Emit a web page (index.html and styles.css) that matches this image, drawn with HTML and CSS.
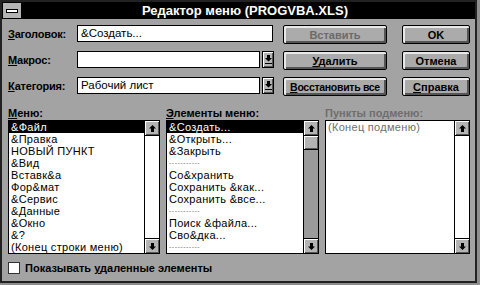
FILE: index.html
```html
<!DOCTYPE html>
<html lang="ru">
<head>
  <meta charset="UTF-8">
  <title>Редактор меню</title>
  <link rel="stylesheet" href="styles.css">
</head>
<body>
  <div class="window">
    <div class="titlebar">
      <div class="sysmenu"><span></span></div>
      <div class="caption">Редактор меню (PROGVBA.XLS)</div>
    </div>

    <div class="body">
      <div class="fields">
        <label class="lbl"><u>З</u>аголовок:</label>
        <div class="edit wide">&amp;Создать...</div>
        <button class="btn disabled">Вставить</button>
        <button class="btn side">OK</button>

        <label class="lbl"><u>М</u>акрос:</label>
        <div class="combo">
          <div class="edit"></div>
          <span class="drop"><svg width="7" height="9" viewBox="0 0 7 9"><path d="M2 0H5V3H7L3.5 6.5L0 3H2Z"/><rect x="0" y="8" width="7" height="1"/></svg></span>
        </div>
        <button class="btn"><u>У</u>далить</button>
        <button class="btn side">Отмена</button>

        <label class="lbl"><u>К</u>атегория:</label>
        <div class="combo">
          <div class="edit">Рабочий лист</div>
          <span class="drop"><svg width="7" height="9" viewBox="0 0 7 9"><path d="M2 0H5V3H7L3.5 6.5L0 3H2Z"/><rect x="0" y="8" width="7" height="1"/></svg></span>
        </div>
        <button class="btn tight"><u>В</u>осстановить все</button>
        <button class="btn side"><u>С</u>правка</button>
      </div>

      <div class="lists">
        <div class="col">
          <div class="cap"><u>М</u>еню:</div>
          <div class="listbox">
            <div class="items">
              <div class="item sel">&amp;Файл</div>
              <div class="item">&amp;Правка</div>
              <div class="item">НОВЫЙ ПУНКТ</div>
              <div class="item">&amp;Вид</div>
              <div class="item">Вставк&amp;а</div>
              <div class="item">Фор&amp;мат</div>
              <div class="item">&amp;Сервис</div>
              <div class="item">&amp;Данные</div>
              <div class="item">&amp;Окно</div>
              <div class="item">&amp;?</div>
              <div class="item">(Конец строки меню)</div>
            </div>
            <div class="scroll">
              <span class="arrow"><svg width="7" height="7" viewBox="0 0 7 7"><path d="M3.5 0L7 3.5H5V7H2V3.5H0Z"/></svg></span>
              <span class="arrow down"><svg width="7" height="7" viewBox="0 0 7 7"><path d="M2 0H5V3.5H7L3.5 7L0 3.5H2Z"/></svg></span>
            </div>
          </div>
        </div>

        <div class="col">
          <div class="cap"><u>Э</u>лементы меню:</div>
          <div class="listbox">
            <div class="items">
              <div class="item sel">&amp;Создать...</div>
              <div class="item">&amp;Открыть...</div>
              <div class="item">&amp;Закрыть</div>
              <div class="item sep">-----------</div>
              <div class="item">Со&amp;хранить</div>
              <div class="item">Сохранить &amp;как...</div>
              <div class="item">Сохранить &amp;все...</div>
              <div class="item sep">-----------</div>
              <div class="item">Поиск &amp;файла...</div>
              <div class="item">Сво&amp;дка...</div>
              <div class="item sep">-----------</div>
            </div>
            <div class="scroll track">
              <span class="arrow"><svg width="7" height="7" viewBox="0 0 7 7"><path d="M3.5 0L7 3.5H5V7H2V3.5H0Z"/></svg></span>
              <span class="thumb"></span>
              <span class="fill"></span>
              <span class="arrow down"><svg width="7" height="7" viewBox="0 0 7 7"><path d="M2 0H5V3.5H7L3.5 7L0 3.5H2Z"/></svg></span>
            </div>
          </div>
        </div>

        <div class="col">
          <div class="cap off">Пункты подменю:</div>
          <div class="listbox">
            <div class="items">
              <div class="item off">(Конец подменю)</div>
            </div>
            <div class="scroll">
              <span class="arrow"><svg width="7" height="7" viewBox="0 0 7 7"><path d="M3.5 0L7 3.5H5V7H2V3.5H0Z"/></svg></span>
              <span class="arrow down"><svg width="7" height="7" viewBox="0 0 7 7"><path d="M2 0H5V3.5H7L3.5 7L0 3.5H2Z"/></svg></span>
            </div>
          </div>
        </div>
      </div>

      <label class="check"><span class="box"></span><span>Показывать <u>у</u>даленные элементы</span></label>
    </div>
  </div>
</body>
</html>
```

FILE: styles.css
```css
html {
  background: #8e8e8e;
}
body {
  margin: 0;
  font-family: "Liberation Sans", Arial, sans-serif;
  font-size: 11px;
  color: #000;
}
.window {
  width: 477px;
  height: 283px;
  box-sizing: border-box;
  border: 2px solid #222;
  background: #a3a3a3;
}
.titlebar {
  height: 17px;
  background: #000;
  display: flex;
  align-items: center;
}
.sysmenu {
  width: 18px;
  height: 15px;
  margin-left: 1px;
  background: #b4b4b4;
  display: flex;
  align-items: center;
  justify-content: center;
}
.sysmenu span {
  width: 10px;
  height: 2px;
  background: #fff;
  border: 1px solid #000;
}
.caption {
  flex: 1;
  text-align: center;
  color: #fff;
  font-weight: bold;
  font-size: 13px;
  padding-right: 6px;
}
.body {
  padding: 6px 6px 0 6px;
}
.fields {
  display: grid;
  grid-template-columns: 69px 206px 119px 68px;
  grid-auto-rows: 19px;
  row-gap: 7px;
}
.lbl {
  font-weight: bold;
  align-self: center;
  margin-top: -2px;
  letter-spacing: -0.2px;
}
.edit {
  height: 17px;
  box-sizing: border-box;
  border: 1px solid #000;
  background: #fff;
  padding: 0 3px;
  line-height: 15px;
  font-size: 11.5px;
  width: 183px;
}
.edit.wide {
  width: 196px;
}
.combo {
  display: flex;
  gap: 2px;
}
.drop {
  width: 12px;
  height: 17px;
  box-sizing: border-box;
  border: 1px solid #000;
  background: #b4b4b4;
  box-shadow: inset 1px 1px 0 #fff, inset -1px -1px 0 #555;
  display: flex;
  align-items: center;
  justify-content: center;
}
.btn {
  width: 104px;
  height: 19px;
  padding: 0;
  border: 1px solid #000;
  border-radius: 2px;
  background: #ababab;
  box-shadow: inset 2px 2px 0 #e8e8e8, inset -2px -2px 0 #555;
  font-family: inherit;
  font-size: 11px;
  font-weight: bold;
  color: #000;
  white-space: nowrap;
}
.btn.tight {
  font-size: 10.5px;
  letter-spacing: -0.3px;
}
.btn.side {
  width: 68px;
}
.btn.disabled {
  color: #6a6a6a;
}
.lists {
  margin-top: 12px;
  display: grid;
  grid-template-columns: 152px 153px 145px;
  column-gap: 6px;
}
.cap {
  height: 12px;
  line-height: 11px;
  font-weight: bold;
}
.off {
  color: #6e6e6e;
}
.listbox {
  height: 134px;
  box-sizing: border-box;
  border: 1px solid #000;
  background: #fff;
  display: flex;
}
.items {
  flex: 1;
  overflow: hidden;
}
.item {
  height: 12px;
  line-height: 12px;
  padding-left: 2px;
  font-size: 11px;
  letter-spacing: 0.3px;
  white-space: nowrap;
}
.item.sel {
  background: #000;
  color: #fff;
}
.item.sep {
  font-size: 7px;
  color: #777;
  letter-spacing: 0.5px;
}
.scroll {
  width: 15px;
  box-sizing: border-box;
  border-left: 1px solid #000;
  display: flex;
  flex-direction: column;
  justify-content: space-between;
}
.scroll.track {
  background: #9a9a9a;
}
.arrow {
  height: 15px;
  box-sizing: border-box;
  border-bottom: 1px solid #000;
  background: #b4b4b4;
  box-shadow: inset 1px 1px 0 #fff, inset -1px -1px 0 #555;
  display: flex;
  align-items: center;
  justify-content: center;
}
.arrow.down {
  border-bottom: none;
  border-top: 1px solid #000;
}
.thumb {
  height: 14px;
  box-sizing: border-box;
  border-bottom: 1px solid #000;
  background: #b4b4b4;
  box-shadow: inset 1px 1px 0 #fff, inset -1px -1px 0 #555;
}
.fill {
  flex: 1;
}
.check {
  margin-top: 8px;
  display: flex;
  align-items: center;
  gap: 5px;
  font-weight: bold;
}
.box {
  width: 12px;
  height: 12px;
  box-sizing: border-box;
  border: 1px solid #333;
  background: #fff;
}
```
